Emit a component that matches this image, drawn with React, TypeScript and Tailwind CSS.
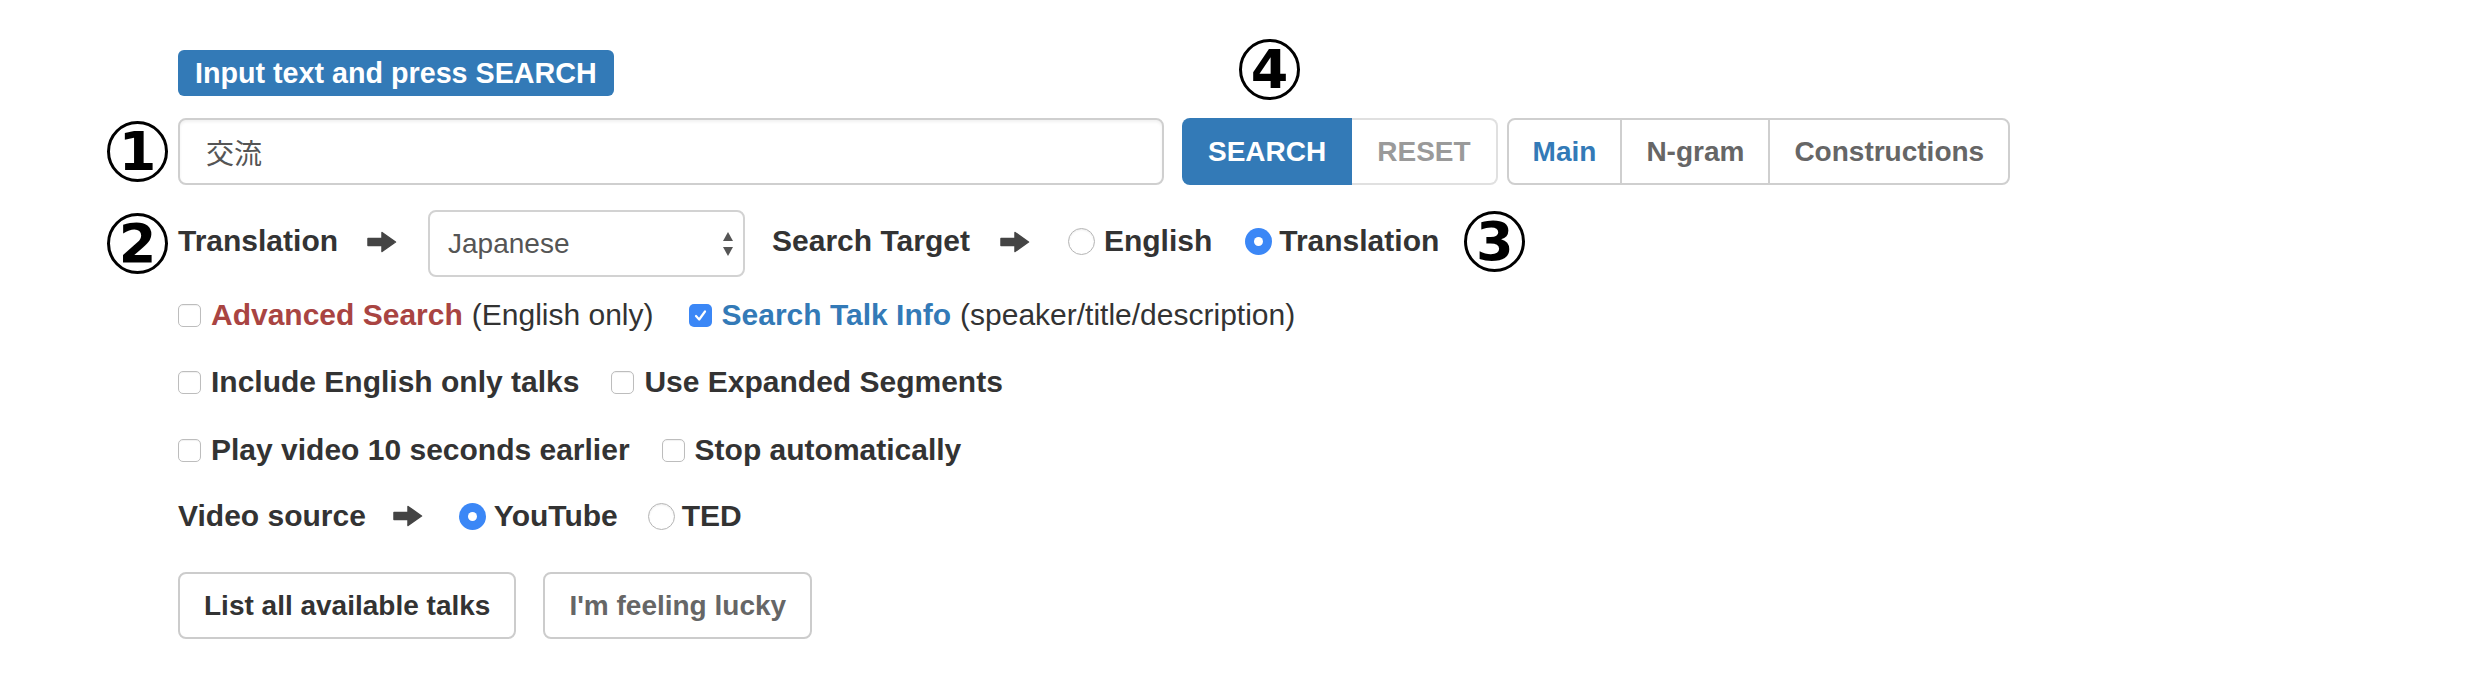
/* ============================================================================
   Talk search panel: query box with SEARCH/RESET, mode tabs, translation and
   target pickers, option checkboxes, video source and the list/lucky buttons.
   Circled numbers are the tutorial markers laid over the form.
   ========================================================================== */

import type { ReactNode } from "react";

function Marker({ n }: { n: string }) {
  return (
    <span className="flex h-[61px] w-[61px] shrink-0 items-center justify-center rounded-full border-[3px] border-black bg-white font-['DejaVu_Sans',sans-serif] text-[54px] font-bold leading-none text-black">
      {n}
    </span>
  );
}

function Arrow() {
  return (
    <svg width="30" height="22" viewBox="0 0 30 22" className="block shrink-0" aria-hidden="true">
      <path
        d="M1 7.5H15V1.5L28.5 11L15 20.5V14.5H1Z"
        fill="#444"
        stroke="#444"
        strokeWidth="1.5"
        strokeLinejoin="round"
      />
    </svg>
  );
}

function Checkbox({ checked = false }: { checked?: boolean }) {
  return checked ? (
    <span className="flex h-[23px] w-[23px] shrink-0 items-center justify-center rounded-[5px] bg-[#3b87f6]">
      <svg width="15" height="15" viewBox="0 0 15 15" aria-hidden="true">
        <path d="M3 8L6.2 11.5L12 3.5" fill="none" stroke="white" strokeWidth="2.2" strokeLinecap="round" strokeLinejoin="round" />
      </svg>
    </span>
  ) : (
    <span className="block h-[23px] w-[23px] shrink-0 rounded-[5px] border border-[#bdbdbd] bg-white shadow-[inset_0_1px_1px_rgba(0,0,0,0.06)]" />
  );
}

function Radio({ checked = false }: { checked?: boolean }) {
  return checked ? (
    <span className="flex h-[27px] w-[27px] shrink-0 items-center justify-center rounded-full bg-[#3b87f6]">
      <span className="h-[9px] w-[9px] rounded-full bg-white" />
    </span>
  ) : (
    <span className="block h-[27px] w-[27px] shrink-0 rounded-full border border-[#b5b5b5] bg-white shadow-[inset_0_1px_2px_rgba(0,0,0,0.08)]" />
  );
}

function Row({ marker, className = "", children }: { marker?: ReactNode; className?: string; children: ReactNode }) {
  return (
    <div className={`flex items-center ${className}`}>
      <div className="mr-[10px] flex w-[61px] shrink-0 justify-center">{marker}</div>
      {children}
    </div>
  );
}

export default function App() {
  return (
    <div className="h-[680px] w-full overflow-hidden bg-white pl-[107px] pt-[50px] font-['Liberation_Sans',Arial,sans-serif] text-[30px] leading-none text-[#333]">
      {/* hint */}
      <Row>
        <span className="flex h-[46px] items-center rounded-[6px] bg-[#337ab7] px-[17px] text-[28.7px] font-bold text-white">
          Input text and press SEARCH
        </span>
      </Row>

      {/* query + buttons */}
      <Row marker={<Marker n="1" />} className="mt-[22px]">
        <div className="flex h-[67px] w-[986px] items-center rounded-[8px] border-2 border-[#cfcfcf] pl-[26px] font-['Noto_Sans_CJK_JP',sans-serif] text-[28px] text-[#555] shadow-[inset_0_2px_3px_rgba(0,0,0,0.06)]">
          交流
        </div>
        <div className="ml-[18px] flex h-[67px] text-[28px] font-bold">
          <div className="relative flex">
            <span className="absolute bottom-[calc(100%+18px)] left-1/2 -translate-x-[28px]">
              <Marker n="4" />
            </span>
            <span className="flex items-center rounded-l-[8px] bg-[#337ab7] px-[26px] text-white">SEARCH</span>
          </div>
          <span className="flex items-center rounded-r-[8px] border-2 border-l-0 border-[#e0e0e0] px-[25px] text-[#9a9a9a]">RESET</span>
        </div>
        <div className="ml-[9px] flex h-[67px] rounded-[8px] border-2 border-[#cfcfcf] text-[28px] font-bold">
          <span className="flex items-center px-[24px] text-[#337ab7]">Main</span>
          <span className="flex items-center border-l-2 border-[#cfcfcf] px-[24px] text-[#666]">N-gram</span>
          <span className="flex items-center border-l-2 border-[#cfcfcf] px-[24px] text-[#666]">Constructions</span>
        </div>
      </Row>

      {/* translation + target */}
      <Row marker={<Marker n="2" />} className="mt-[25px]">
        <span className="pb-[5px] font-bold">Translation</span>
        <span className="ml-[29px] flex pb-[4px]"><Arrow /></span>
        <div className="ml-[31px] flex h-[67px] w-[317px] items-center justify-between rounded-[8px] border-2 border-[#d2d2d2] pl-[18px] pr-[8px] text-[28px] text-[#555]">
          <span>Japanese</span>
          <svg width="14" height="28" viewBox="0 0 14 28" aria-hidden="true">
            <path d="M7 2L12 11H2Z" fill="#555" />
            <path d="M7 26L12 17H2Z" fill="#555" />
          </svg>
        </div>
        <span className="ml-[27px] pb-[5px] font-bold">Search Target</span>
        <span className="ml-[30px] flex pb-[4px]"><Arrow /></span>
        <span className="ml-[38px] flex pb-[4px]"><Radio /></span>
        <span className="ml-[9px] pb-[5px] font-bold">English</span>
        <span className="ml-[33px] flex pb-[4px]"><Radio checked /></span>
        <span className="ml-[7px] pb-[5px] font-bold">Translation</span>
        <span className="ml-[25px] flex pb-[4px]"><Marker n="3" /></span>
      </Row>

      {/* options */}
      <Row className="mt-[18px] h-[40px]">
        <Checkbox />
        <span className="ml-[10px] font-bold text-[#a94442]">Advanced Search</span>
        <span className="ml-[9px]">(English only)</span>
        <span className="ml-[35px] flex"><Checkbox checked /></span>
        <span className="ml-[10px] font-bold text-[#337ab7]">Search Talk Info</span>
        <span className="ml-[9px]">(speaker/title/description)</span>
      </Row>

      <Row className="mt-[27px] h-[40px]">
        <Checkbox />
        <span className="ml-[10px] font-bold">Include English only talks</span>
        <span className="ml-[32px] flex"><Checkbox /></span>
        <span className="ml-[10px] font-bold">Use Expanded Segments</span>
      </Row>

      <Row className="mt-[28px] h-[40px]">
        <Checkbox />
        <span className="ml-[10px] font-bold">Play video 10 seconds earlier</span>
        <span className="ml-[32px] flex"><Checkbox /></span>
        <span className="ml-[10px] font-bold">Stop automatically</span>
      </Row>

      {/* video source */}
      <Row className="mt-[26px] h-[40px]">
        <span className="font-bold">Video source</span>
        <span className="ml-[27px] flex"><Arrow /></span>
        <span className="ml-[36px] flex"><Radio checked /></span>
        <span className="ml-[8px] font-bold">YouTube</span>
        <span className="ml-[30px] flex"><Radio /></span>
        <span className="ml-[7px] font-bold">TED</span>
      </Row>

      {/* actions */}
      <Row className="mt-[36px]">
        <span className="flex h-[67px] items-center rounded-[8px] border-2 border-[#cccccc] px-[24px] text-[28px] font-bold text-[#333]">
          List all available talks
        </span>
        <span className="ml-[27px] flex h-[67px] items-center rounded-[8px] border-2 border-[#cccccc] px-[24px] text-[28px] font-bold text-[#666]">
          I'm feeling lucky
        </span>
      </Row>
    </div>
  );
}
